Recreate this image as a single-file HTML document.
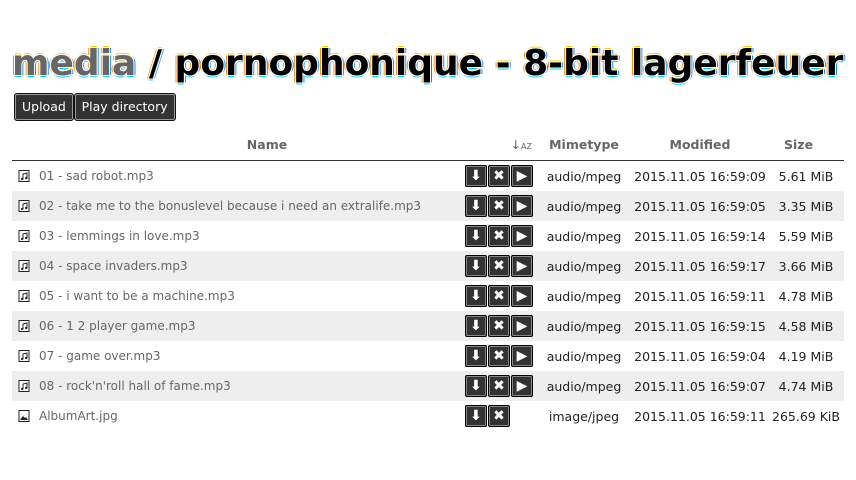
<!DOCTYPE html><html><head><style>
body{margin:0;background:#fff;font-family:"DejaVu Sans",sans-serif;font-size:12px;color:#333;width:856px;height:480px;overflow:hidden}
h1{position:absolute;left:12px;top:43px;margin:0;font-size:36px;font-weight:bold;white-space:nowrap;color:#000;
text-shadow:-1px -1px 0 #fff,1px 1px 0 #fff,-1px 1px 0 #fff,1px -1px 0 #fff,-2px 0 0 #f80,2px 0 0 #08f,0 -2px 0 #fc0,0 2px 0 #0cf}
h1 .m{color:#666}
.btns{position:absolute;left:14px;top:93px}
.b{display:inline-block;background:#333;color:#fff;border:1px solid #111;border-radius:3px;box-shadow:0 0 0 1px #999 inset;padding:0 7px;height:26px;line-height:26px;font-size:12.5px;margin-right:-4px}
table{position:absolute;left:12px;top:128px;width:832px;border-collapse:collapse;table-layout:fixed}
th{height:32px;font-weight:bold;color:#666;font-size:12.5px;border-bottom:1px solid #333;padding:0}
td{height:30px;padding:0;white-space:nowrap;overflow:hidden}
tr.g td{background:#eee}
.n{color:#666;padding-left:6px}
.n svg{vertical-align:-2px;margin-right:9px}
.ac{padding-left:3px}
.ac span{display:inline-block;width:20px;height:20px;background:#333;border:1px solid #000;border-radius:2px;box-shadow:0 0 0 1px #888 inset;color:#fff;font-weight:bold;text-align:center;line-height:20px;font-size:14px;margin-right:1px;vertical-align:middle}
.c{text-align:center;color:#222;font-size:12.5px}
</style></head><body>
<h1><span class="m">media</span> / pornophonique - 8-bit lagerfeuer</h1>
<div class="btns"><span class="b">Upload</span> <span class="b">Play directory</span></div>
<svg width="0" height="0" style="position:absolute"><defs>
<symbol id="mu" viewBox="0 0 12 12"><rect x="1" y="0.5" width="10" height="11" fill="#fff" stroke="#222"/><path d="M5 9V4l4-1v5" stroke="#222" fill="none"/><circle cx="4.2" cy="9" r="1.2" fill="#222"/><circle cx="8.2" cy="8" r="1.2" fill="#222"/></symbol>
<symbol id="im" viewBox="0 0 12 12"><rect x="1" y="0.5" width="10" height="11" fill="#fff" stroke="#222"/><path d="M2 10l3-4 2 2 1-1 2 3z" fill="#222"/></symbol></defs></svg>
<table>
<colgroup><col style="width:450px"><col style="width:74px"><col style="width:96px"><col style="width:136px"><col></colgroup>
<tr><th style="text-align:center;padding-left:60px">Name</th><th style="text-align:right;padding-right:4px;font-weight:normal">↓<span style="font-size:8px">AZ</span></th><th>Mimetype</th><th>Modified</th><th style="text-align:left;padding-left:16px">Size</th></tr>
<tr><td class="n"><svg width="12" height="12"><use href="#mu"/></svg>01 - sad robot.mp3</td><td class="ac"><span>⬇</span><span>✖</span><span>▶</span></td><td class="c">audio/mpeg</td><td class="c">2015.11.05 16:59:09</td><td class="c">5.61 MiB</td></tr>
<tr class="g"><td class="n"><svg width="12" height="12"><use href="#mu"/></svg>02 - take me to the bonuslevel because i need an extralife.mp3</td><td class="ac"><span>⬇</span><span>✖</span><span>▶</span></td><td class="c">audio/mpeg</td><td class="c">2015.11.05 16:59:05</td><td class="c">3.35 MiB</td></tr>
<tr><td class="n"><svg width="12" height="12"><use href="#mu"/></svg>03 - lemmings in love.mp3</td><td class="ac"><span>⬇</span><span>✖</span><span>▶</span></td><td class="c">audio/mpeg</td><td class="c">2015.11.05 16:59:14</td><td class="c">5.59 MiB</td></tr>
<tr class="g"><td class="n"><svg width="12" height="12"><use href="#mu"/></svg>04 - space invaders.mp3</td><td class="ac"><span>⬇</span><span>✖</span><span>▶</span></td><td class="c">audio/mpeg</td><td class="c">2015.11.05 16:59:17</td><td class="c">3.66 MiB</td></tr>
<tr><td class="n"><svg width="12" height="12"><use href="#mu"/></svg>05 - i want to be a machine.mp3</td><td class="ac"><span>⬇</span><span>✖</span><span>▶</span></td><td class="c">audio/mpeg</td><td class="c">2015.11.05 16:59:11</td><td class="c">4.78 MiB</td></tr>
<tr class="g"><td class="n"><svg width="12" height="12"><use href="#mu"/></svg>06 - 1 2 player game.mp3</td><td class="ac"><span>⬇</span><span>✖</span><span>▶</span></td><td class="c">audio/mpeg</td><td class="c">2015.11.05 16:59:15</td><td class="c">4.58 MiB</td></tr>
<tr><td class="n"><svg width="12" height="12"><use href="#mu"/></svg>07 - game over.mp3</td><td class="ac"><span>⬇</span><span>✖</span><span>▶</span></td><td class="c">audio/mpeg</td><td class="c">2015.11.05 16:59:04</td><td class="c">4.19 MiB</td></tr>
<tr class="g"><td class="n"><svg width="12" height="12"><use href="#mu"/></svg>08 - rock'n'roll hall of fame.mp3</td><td class="ac"><span>⬇</span><span>✖</span><span>▶</span></td><td class="c">audio/mpeg</td><td class="c">2015.11.05 16:59:07</td><td class="c">4.74 MiB</td></tr>
<tr><td class="n"><svg width="12" height="12"><use href="#im"/></svg>AlbumArt.jpg</td><td class="ac"><span>⬇</span><span>✖</span></td><td class="c">image/jpeg</td><td class="c">2015.11.05 16:59:11</td><td class="c">265.69 KiB</td></tr>
</table>
</body></html>
